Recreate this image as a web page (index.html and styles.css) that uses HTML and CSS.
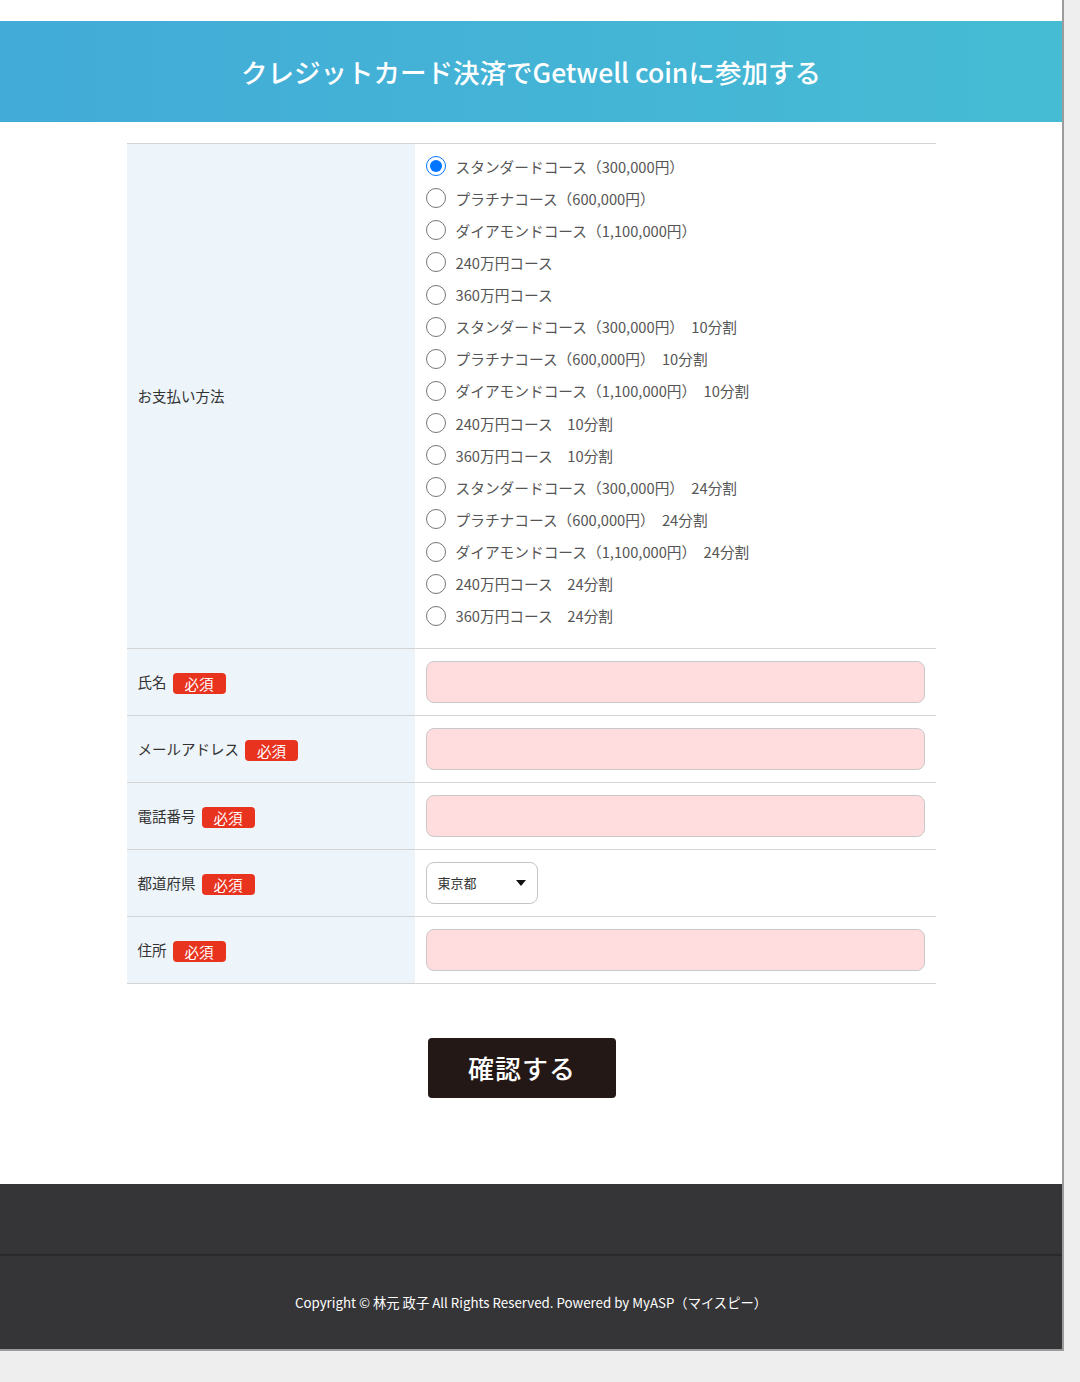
FILE: index.html
```html
<!DOCTYPE html>
<html lang="ja">
<head>
    <meta charset="UTF-8">
    <meta name="viewport" content="width=device-width, initial-scale=1.0">
    <title>クレジットカード決済でGetwell coinに参加する</title>
    <link rel="stylesheet" href="styles.css">
</head>
<body>
    <div class="page">
        <div class="header">
            <h1>クレジットカード決済でGetwell coinに参加する</h1>
        </div>

        <form class="entry-form">
            <div class="form-table">
                <div class="form-row">
                    <div class="form-label">お支払い方法</div>
                    <div class="form-field course-list">
                        <label class="course"><input type="radio" name="course" checked><span>スタンダードコース（300,000円）</span></label>
                        <label class="course"><input type="radio" name="course"><span>プラチナコース（600,000円）</span></label>
                        <label class="course"><input type="radio" name="course"><span>ダイアモンドコース（1,100,000円）</span></label>
                        <label class="course"><input type="radio" name="course"><span>240万円コース</span></label>
                        <label class="course"><input type="radio" name="course"><span>360万円コース</span></label>
                        <label class="course"><input type="radio" name="course"><span>スタンダードコース（300,000円）　10分割</span></label>
                        <label class="course"><input type="radio" name="course"><span>プラチナコース（600,000円）　10分割</span></label>
                        <label class="course"><input type="radio" name="course"><span>ダイアモンドコース（1,100,000円）　10分割</span></label>
                        <label class="course"><input type="radio" name="course"><span>240万円コース　10分割</span></label>
                        <label class="course"><input type="radio" name="course"><span>360万円コース　10分割</span></label>
                        <label class="course"><input type="radio" name="course"><span>スタンダードコース（300,000円）　24分割</span></label>
                        <label class="course"><input type="radio" name="course"><span>プラチナコース（600,000円）　24分割</span></label>
                        <label class="course"><input type="radio" name="course"><span>ダイアモンドコース（1,100,000円）　24分割</span></label>
                        <label class="course"><input type="radio" name="course"><span>240万円コース　24分割</span></label>
                        <label class="course"><input type="radio" name="course"><span>360万円コース　24分割</span></label>
                    </div>
                </div>

                <div class="form-row">
                    <div class="form-label">氏名<span class="required">必須</span></div>
                    <div class="form-field"><input type="text" class="text-input"></div>
                </div>

                <div class="form-row">
                    <div class="form-label">メールアドレス<span class="required">必須</span></div>
                    <div class="form-field"><input type="email" class="text-input"></div>
                </div>

                <div class="form-row">
                    <div class="form-label">電話番号<span class="required">必須</span></div>
                    <div class="form-field"><input type="tel" class="text-input"></div>
                </div>

                <div class="form-row">
                    <div class="form-label">都道府県<span class="required">必須</span></div>
                    <div class="form-field">
                        <div class="select-box">
                            <span>東京都</span>
                            <span class="select-arrow"></span>
                        </div>
                    </div>
                </div>

                <div class="form-row">
                    <div class="form-label">住所<span class="required">必須</span></div>
                    <div class="form-field"><input type="text" class="text-input"></div>
                </div>
            </div>

            <div class="form-submit">
                <button type="button" class="submit-btn">確認する</button>
            </div>
        </form>

        <div class="footer">
            <div class="footer-top"></div>
            <div class="footer-bottom">
                <p>Copyright © 林元 政子 All Rights Reserved. Powered by MyASP（マイスピー）</p>
            </div>
        </div>
    </div>
</body>
</html>
```

FILE: styles.css
```css
body {
    margin: 0;
    background-color: #eeeeee;
    font-family: "Noto Sans CJK JP", "Noto Sans", sans-serif;
    color: #333;
}

.page {
    width: 1062px;
    background-color: #fff;
    border-right: 2px solid #9b9b9b;
    border-bottom: 2px solid #9b9b9b;
    padding-top: 21px;
}

.header {
    height: 101px;
    display: flex;
    align-items: center;
    justify-content: center;
    background: linear-gradient(90deg, #42abd8 0%, #46bcd4 100%);
}

.header h1 {
    margin: 0;
    color: #fff;
    font-size: 26.5px;
    font-weight: 500;
}

/* form table */
.form-table {
    width: 809px;
    margin: 21px auto 0;
    border-top: 1px solid #d4d4d4;
}

.form-row {
    display: grid;
    grid-template-columns: 288px 1fr;
    border-bottom: 1px solid #d4d4d4;
}

.form-label {
    background-color: #edf4fa;
    padding: 0 11px;
    display: flex;
    align-items: center;
    font-size: 14.5px;
    color: #333;
}

.form-field {
    padding: 12px 10px 12px 11px;
}

.required {
    display: inline-block;
    margin-left: 6px;
    margin-top: 3px;
    padding: 0 12px;
    height: 21px;
    line-height: 21px;
    border-radius: 4px;
    background-color: #e8331f;
    color: #fff;
    font-size: 14.5px;
}

.course-list {
    padding: 6px 10px 16px 11px;
    display: flex;
    flex-direction: column;
}

.course {
    display: flex;
    align-items: center;
    height: 32.14px;
    font-size: 14.7px;
    color: #555;
}

.course input {
    width: 20px;
    height: 20px;
    margin: 0 10px 0 0;
}

.text-input {
    display: block;
    box-sizing: border-box;
    width: 499px;
    height: 42px;
    border: 1px solid #c9c9c9;
    border-radius: 8px;
    background-color: #ffdcdd;
}

.select-box {
    box-sizing: border-box;
    width: 112px;
    height: 42px;
    border: 1px solid #c4c4c4;
    border-radius: 8px;
    display: flex;
    align-items: center;
    justify-content: space-between;
    padding: 0 11px;
    font-size: 13px;
    color: #333;
}

.select-arrow {
    width: 0;
    height: 0;
    border-left: 5px solid transparent;
    border-right: 5px solid transparent;
    border-top: 6px solid #111;
}

/* submit */
.form-submit {
    display: flex;
    justify-content: center;
    padding: 54px 18px 86px 0;
}

.submit-btn {
    width: 188px;
    height: 60px;
    border: none;
    border-radius: 4px;
    background-color: #231815;
    color: #fff;
    font-family: inherit;
    font-size: 26px;
    font-weight: 500;
    letter-spacing: 1px;
}

/* footer */
.footer {
    background-color: #353437;
}

.footer-top {
    height: 70px;
    border-bottom: 2px solid #2a292c;
}

.footer-bottom {
    height: 93px;
    display: flex;
    align-items: center;
    justify-content: center;
}

.footer-bottom p {
    margin: 0;
    color: #fff;
    font-size: 13.3px;
}
```
